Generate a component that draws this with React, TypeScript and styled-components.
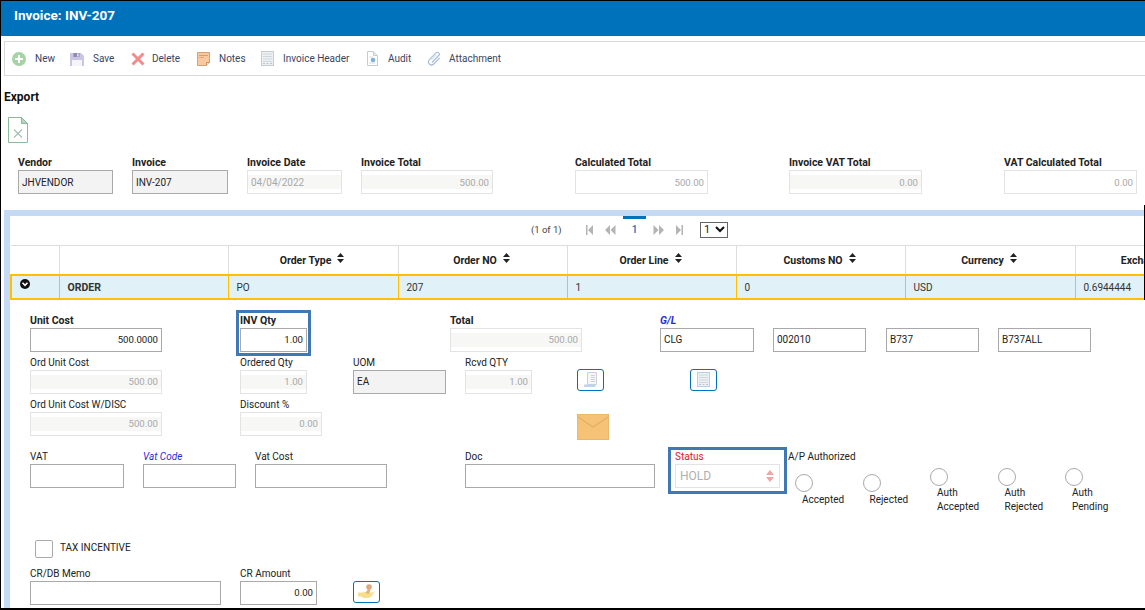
import React from "react";
import styled, { createGlobalStyle } from "styled-components";

const Global = createGlobalStyle`
  html, body { margin: 0; padding: 0; background: #fff; overflow: hidden; }
  * { box-sizing: border-box; }
`;

const FONT = `Roboto, "Noto Sans", Arial, sans-serif`;

const Page = styled.div`
  position: relative;
  width: 1145px; height: 610px; overflow: hidden; background: #fff;
  border-top: 1px solid #000; border-left: 1px solid #000; border-bottom: 2px solid #000;
  display: flex; flex-direction: column;
  font-family: ${FONT}; font-size: 10.5px; color: #222;
  &::after { content: ""; position: absolute; right: 0; top: 204px; width: 1px; height: 95px; background: #000; }
`;
const Header = styled.header`
  height: 35px; flex: none; background: #0072bc; color: #fff;
  font-size: 13.5px; font-weight: 700; padding: 6px 0 0 13px; line-height: 16px;
`;
const Toolbar = styled.nav`
  flex: none; height: 35px; margin: 5px 0 0 3px; border: 1px solid #d8d8d8; border-right: 0;
  display: flex; align-items: center; padding-left: 7px;
`;
const Tool = styled.div<{ $w: number; $gap: number }>`
  width: ${(p) => p.$w}px; flex: none; display: flex; align-items: center; gap: ${(p) => p.$gap}px;
  color: #3b4560; font-size: 10px;
  svg { flex: none; }
`;
const ExportTitle = styled.h2`
  margin: 14px 0 0 3px; font-size: 12px; line-height: 14px; font-weight: 700; color: #111;
`;
const ExcelWrap = styled.div`
  margin: 13px 0 0 7px; height: 26px; flex: none; svg { display: block; }
`;
const TopFields = styled.div`
  display: flex; flex: none; margin: 13px 0 0 17px; height: 38px;
`;
const Field = styled.div<{ $w: number; $ml?: number; $outlined?: boolean }>`
  width: ${(p) => p.$w}px; margin-left: ${(p) => p.$ml ?? 0}px; flex: none;
  ${(p) => (p.$outlined ? "outline: 3px solid #3f78b5; outline-offset: 1px;" : "")}
`;
const Label = styled.label<{ $bold?: boolean; $tone?: string; $italic?: boolean }>`
  display: block; height: 14px; line-height: 14px; white-space: nowrap;
  font-size: ${(p) => (p.$bold ? "10.5px" : "10px")};
  font-weight: ${(p) => (p.$bold ? 700 : 400)};
  font-style: ${(p) => (p.$italic ? "italic" : "normal")};
  color: ${(p) => p.$tone ?? "#222"};
`;
const LabelGap = styled.div`
  height: 14px;
`;
const Input = styled.input<{ $kind?: "plain" | "dim" | "dimFlat" | "grey"; $right?: boolean }>`
  display: block; width: 100%; height: 24px; padding: 0 3px; border-radius: 0; outline: 0;
  font-family: ${FONT}; font-size: ${(p) => (p.$right ? "9.6px" : "10px")};
  text-align: ${(p) => (p.$right ? "right" : "left")};
  border: 1px solid ${(p) => (p.$kind === "dim" || p.$kind === "dimFlat" ? "#e3e3e3" : "#a9a9a9")};
  color: ${(p) => (p.$kind === "dim" || p.$kind === "dimFlat" ? "#a8a8a8" : "#222")};
  background: ${(p) =>
    p.$kind === "grey"
      ? "#f3f3f3"
      : p.$kind === "dim"
        ? "linear-gradient(#f7f7f5,#f7f7f5) center/100% 14px no-repeat #fff"
        : "#fff"};
`;
const Panel = styled.section`
  flex: 1; min-height: 0; margin: 16px 0 0 3px; border-top: 6px solid #c5daf5; border-left: 6px solid #c5daf5;
  display: flex; flex-direction: column; overflow: hidden;
`;
const Pager = styled.div`
  flex: none; height: 29px; display: flex; align-items: center; padding-left: 521px; color: #444; font-size: 9.5px;
`;
const PagerCount = styled.span`
  width: 54px; flex: none; margin-top: -3px;
`;
const PagerIcon = styled.span<{ $w: number; $ml?: number }>`
  width: ${(p) => p.$w}px; margin-left: ${(p) => p.$ml ?? 0}px; flex: none; margin-top: -2px;
  display: flex; align-items: center; justify-content: center;
  svg { flex: none; }
`;
const PageNum = styled.span`
  position: relative; width: 23px; flex: none; height: 29px; line-height: 28px; text-align: center;
  color: #0072bc; font-weight: 500; font-size: 10px;
  &::before { content: ""; position: absolute; left: 0; right: 0; top: 0; height: 3px; background: #0072bc; }
`;
const PageSelect = styled.div`
  width: 28px; height: 16px; margin: -2px 0 0 12px; flex: none; border: 1px solid #666; color: #222; font-size: 11px;
  display: flex; align-items: center; justify-content: space-between; padding: 0 2px 0 3px;
`;
const Table = styled.table`
  flex: none; table-layout: fixed; width: 1240px; border-collapse: collapse; border-top: 1px solid #ddd;
  font-size: 10px;
`;
const Th = styled.th<{ $w: number }>`
  width: ${(p) => p.$w}px; height: 29px; padding: 2px 2px 0 0; border-left: 1px solid #ddd; font-weight: 700; font-size: 10.5px;
  text-align: center; color: #222;
  &:first-child { border-left: 0; }
  svg { margin: 0 0 6px 6px; vertical-align: middle; }
`;
const Tr = styled.tr`
  background: #e0f1f8;
`;
const Td = styled.td<{ $bold?: boolean }>`
  height: 24px; padding: 2px 0 0 8px; border: 2px solid #ffc000; border-width: 2px 1px;
  font-weight: ${(p) => (p.$bold ? 700 : 400)}; font-size: ${(p) => (p.$bold ? "10.5px" : "10px")};
  color: #333; white-space: nowrap; overflow: hidden;
  &:first-child { border-left-width: 2px; padding: 0 0 5px 8px; }
  svg { display: block; }
`;
const Form = styled.div`
  padding: 14px 0 0 20px; display: flex; flex-direction: column;
`;
const Row = styled.div<{ $mt?: number }>`
  display: flex; flex: none; height: 38px; margin-top: ${(p) => p.$mt ?? 4}px;
`;
const IconButton = styled.button<{ $ml: number; $mt?: number }>`
  width: 27px; height: 22px; flex: none; margin: ${(p) => p.$mt ?? 13}px 0 0 ${(p) => p.$ml}px; padding: 0;
  background: #fff; border: 1px solid #0072bc; border-radius: 3px; display: flex; align-items: center; justify-content: center;
`;
const Envelope = styled.div`
  margin: 16px 0 0 255px; width: 32px; height: 26px; flex: none;
  svg { display: block; }
`;
const StatusBox = styled.div`
  width: 119px; height: 47px; margin: -3px 0 0 13px; flex: none; border: 3px solid #3f78b5; padding: 0 4px 0 4px;
`;
const StatusSelect = styled.div`
  height: 24px; border: 1px solid #e3e3e3; color: #b0b0b0; font-size: 12px; padding: 0 5px 0 4px;
  display: flex; align-items: center; justify-content: space-between;
`;
const ApBlock = styled.div`
  width: 350px; margin-left: 1px; flex: none;
`;
const Radios = styled.div`
  display: flex; padding-left: 7px;
`;
const RadioItem = styled.div<{ $low?: boolean }>`
  width: 67.5px; flex: none; padding-top: ${(p) => (p.$low ? 10 : 4)}px;
`;
const Circle = styled.div`
  width: 18px; height: 18px; border-radius: 50%; border: 1px solid #aaa; background: #fff;
`;
const RadioText = styled.div<{ $low?: boolean }>`
  margin: ${(p) => (p.$low ? 1 : 0)}px 0 0 7px; font-size: 10px; line-height: 14px; color: #222;
`;
const CheckRow = styled.div`
  display: flex; align-items: center; gap: 7px; height: 18px; margin: 52px 0 0 5px; font-size: 10px; color: #222;
`;
const Check = styled.div`
  width: 18px; height: 18px; border: 1px solid #aaa; border-radius: 2px;
`;
const CheckText = styled.span`
  margin-top: -2px;
`;

const Plus = () => (
  <svg width="14" height="14" viewBox="0 0 14 14"><circle cx="7" cy="7" r="7" fill="#a5d3a5" /><path d="M7 3v8M3 7h8" stroke="#fff" strokeWidth="2" /></svg>
);
const Floppy = () => (
  <svg width="14" height="14" viewBox="0 0 14 14"><path d="M0 1h11l3 3v9a1 1 0 0 1-1 1H0z" fill="#c9c5e2" /><rect x="3.5" y="1" width="6" height="4" fill="#8f8ab5" /><rect x="7" y="1.5" width="1.6" height="3" fill="#e6e4f2" /><rect x="2" y="8" width="10" height="6" fill="#f5f4fa" /></svg>
);
const Cross = () => (
  <svg width="14" height="14" viewBox="0 0 14 14"><path d="M1.5 1.5l11 11M12.5 1.5l-11 11" stroke="#ef8d8d" strokeWidth="3" /></svg>
);
const Note = () => (
  <svg width="13" height="14" viewBox="0 0 13 14"><path d="M.5.5h12v10l-3 3H.5z" fill="#fac89e" stroke="#d9a072" /><path d="M2 3.5h9" stroke="#e39a5f" /><path d="M2 5.5h5" stroke="#eba56f" /><path d="M9.5 13.5v-3h3" fill="#eee" stroke="#c99468" /></svg>
);
const SheetIcon = () => (
  <svg width="13" height="15" viewBox="0 0 13 15"><rect x=".5" y=".5" width="12" height="14" fill="#eef1f3" stroke="#c4cbd1" /><path d="M2 3h9M2 5.5h9M2 8h9M2 10.5h9" stroke="#cfd6dc" /><path d="M2 12.5h2M5.5 12.5h2M9 12.5h2" stroke="#bcc4cb" /></svg>
);
const AuditIcon = () => (
  <svg width="11" height="15" viewBox="0 0 11 15"><path d="M.5.5h6l4 4v10H.5z" fill="#fff" stroke="#c7cdd4" /><path d="M6.5.5v4h4" fill="#e6eaee" stroke="#c7cdd4" /><path d="M2 6h4M2 12h6" stroke="#d8dde2" /><circle cx="6" cy="9" r="2.3" fill="#7fb0d6" /></svg>
);
const Clip = () => (
  <svg width="15" height="15" viewBox="0 0 15 15" fill="none"><path d="M5 11.5l6.7-7a1.9 1.9 0 0 0-2.7-2.7L2.4 8.7a3 3 0 0 0 4.3 4.3l6-6.2" stroke="#a9bddc" strokeWidth="1.2" /><path d="M4.4 9l5-5.2" stroke="#c5d3e8" strokeWidth="1" /></svg>
);
const Excel = () => (
  <svg width="20" height="26" viewBox="0 0 20 26" fill="none"><path d="M.5.5h13l6 6v19H.5z" fill="#fff" stroke="#8dbb98" /><path d="M13.5.5v6h6z" fill="#b5d6bd" stroke="#8dbb98" /><path d="M6 12.5l8 8M14 12.5l-8 8" stroke="#a3bdb0" strokeWidth="1.1" /></svg>
);
const Sort = () => (
  <svg width="7" height="10" viewBox="0 0 7 10"><path d="M3.5 0L7 4H0zM0 6h7l-3.5 4z" fill="#222" /></svg>
);
const PagerGlyph = ({ d }: { d: string }) => (
  <svg width="12" height="10" viewBox="0 0 12 10"><path d={d} fill="#b4b4b4" /></svg>
);
const Chevron = () => (
  <svg width="10" height="10" viewBox="0 0 10 10"><circle cx="5" cy="5" r="5" fill="#111" /><path d="M2.5 3.8L5 6.3l2.5-2.5" stroke="#fff" strokeWidth="1.6" fill="none" /></svg>
);
const Receipt = () => (
  <svg width="16" height="17" viewBox="0 0 16 17" fill="none"><path d="M4.5 1.5h9v12h-9z" fill="#f5f6f8" stroke="#c9d0d7" /><path d="M8 4.5h4M8 6.5h4M8 8.5h4M8 10.5h4" stroke="#ccd3da" /><path d="M1 13.5h11.5v2.5H1z" fill="#c3d3e0" /></svg>
);
const Coins = () => (
  <svg width="17" height="15" viewBox="0 0 17 15"><path d="M0 8.5h4.5l3-.8 3.5.8h3l3-1.5-3.5 5.5-3 1.5H5.5l-2-1.5H0z" fill="#f7de8d" /><path d="M7.5 9L10 5l2.5.8L11 10z" fill="#dcb877" /><circle cx="11" cy="3" r="2.8" fill="#dfa57c" /></svg>
);

const topFields = [
  { l: "Vendor", w: 95, ml: 0, v: "JHVENDOR", k: "grey" as const },
  { l: "Invoice", w: 96, ml: 19, v: "INV-207", k: "grey" as const },
  { l: "Invoice Date", w: 95, ml: 19, v: "04/04/2022", k: "dim" as const },
  { l: "Invoice Total", w: 132, ml: 19, v: "500.00", k: "dim" as const, r: true },
  { l: "Calculated Total", w: 133, ml: 82, v: "500.00", k: "dimFlat" as const, r: true },
  { l: "Invoice VAT Total", w: 133, ml: 81, v: "0.00", k: "dim" as const, r: true },
  { l: "VAT Calculated Total", w: 133, ml: 82, v: "0.00", k: "dimFlat" as const, r: true },
];
const cols = [
  { t: "", w: 48 }, { t: "", w: 169 }, { t: "Order Type", w: 170 }, { t: "Order NO", w: 169 },
  { t: "Order Line", w: 169 }, { t: "Customs NO", w: 169 }, { t: "Currency", w: 170 }, { t: "Exchange Rate", w: 176 },
];

export default function App() {
  return (
    <Page>
      <Global />
      <Header>Invoice: INV-207</Header>
      <Toolbar>
        <Tool $w={58} $gap={9}><Plus />New</Tool>
        <Tool $w={61} $gap={9}><Floppy />Save</Tool>
        <Tool $w={66} $gap={7}><Cross />Delete</Tool>
        <Tool $w={64} $gap={9}><Note />Notes</Tool>
        <Tool $w={106} $gap={9}><SheetIcon />Invoice Header</Tool>
        <Tool $w={60} $gap={10}><AuditIcon />Audit</Tool>
        <Tool $w={90} $gap={7}><Clip />Attachment</Tool>
      </Toolbar>
      <ExportTitle>Export</ExportTitle>
      <ExcelWrap><Excel /></ExcelWrap>
      <TopFields>
        {topFields.map((f) => (
          <Field key={f.l} $w={f.w} $ml={f.ml}>
            <Label $bold>{f.l}</Label>
            <Input readOnly value={f.v} $kind={f.k} $right={f.r} />
          </Field>
        ))}
      </TopFields>
      <Panel>
        <Pager>
          <PagerCount>(1 of 1)</PagerCount>
          <PagerIcon $w={8}><PagerGlyph d="M3 0h1.5v10H3zM10 0v10L5 5z" /></PagerIcon>
          <PagerIcon $w={27} $ml={3}><PagerGlyph d="M6 0v10L1 5zM11.5 0v10l-5-5z" /></PagerIcon>
          <PageNum>1</PageNum>
          <PagerIcon $w={26}><PagerGlyph d="M.5 0v10l5-5zM6 0v10l5-5z" /></PagerIcon>
          <PagerIcon $w={16}><PagerGlyph d="M2 0v10l5-5zM7.5 0H9v10H7.5z" /></PagerIcon>
          <PageSelect>1<svg width="10" height="7" viewBox="0 0 10 7"><path d="M1 1l4 4 4-4" stroke="#111" strokeWidth="2" fill="none" /></svg></PageSelect>
        </Pager>
        <Table>
          <thead>
            <tr>
              {cols.map((c, i) => (
                <Th key={i} $w={c.w}>{c.t}{c.t && <Sort />}</Th>
              ))}
            </tr>
          </thead>
          <tbody>
            <Tr>
              <Td><Chevron /></Td>
              <Td $bold>ORDER</Td>
              <Td>PO</Td>
              <Td>207</Td>
              <Td>1</Td>
              <Td>0</Td>
              <Td>USD</Td>
              <Td>0.6944444</Td>
            </Tr>
          </tbody>
        </Table>
        <Form>
          <Row $mt={0}>
            <Field $w={132}><Label $bold>Unit Cost</Label><Input readOnly value="500.0000" $right /></Field>
            <Field $w={67} $ml={78} $outlined><Label $bold>INV Qty</Label><Input readOnly value="1.00" $right /></Field>
            <Field $w={132} $ml={143}><Label $bold>Total</Label><Input readOnly value="500.00" $kind="dim" $right /></Field>
            <Field $w={94} $ml={78}><Label $bold $italic $tone="#2b2bd6">G/L</Label><Input readOnly value="CLG" /></Field>
            <Field $w={93} $ml={19}><LabelGap /><Input readOnly value="002010" /></Field>
            <Field $w={93} $ml={20}><LabelGap /><Input readOnly value="B737" /></Field>
            <Field $w={93} $ml={19}><LabelGap /><Input readOnly value="B737ALL" /></Field>
          </Row>
          <Row>
            <Field $w={132}><Label>Ord Unit Cost</Label><Input readOnly value="500.00" $kind="dim" $right /></Field>
            <Field $w={67} $ml={78}><Label>Ordered Qty</Label><Input readOnly value="1.00" $kind="dim" $right /></Field>
            <Field $w={93} $ml={46}><Label>UOM</Label><Input readOnly value="EA" $kind="grey" /></Field>
            <Field $w={67} $ml={19}><Label>Rcvd QTY</Label><Input readOnly value="1.00" $kind="dim" $right /></Field>
            <IconButton $ml={45}><Receipt /></IconButton>
            <IconButton $ml={86}><SheetIcon /></IconButton>
          </Row>
          <Row>
            <Field $w={132}><Label>Ord Unit Cost W/DISC</Label><Input readOnly value="500.00" $kind="dim" $right /></Field>
            <Field $w={82} $ml={78}><Label>Discount %</Label><Input readOnly value="0.00" $kind="dim" $right /></Field>
            <Envelope>
              <svg width="32" height="26" viewBox="0 0 32 26"><rect width="32" height="26" fill="#f5c276" stroke="#e0ad66" /><path d="M1 3l15 10L31 3" fill="none" stroke="#dca860" /></svg>
            </Envelope>
          </Row>
          <Row $mt={14}>
            <Field $w={94}><Label>VAT</Label><Input readOnly value="" /></Field>
            <Field $w={93} $ml={19}><Label $italic $tone="#2b2bd6">Vat Code</Label><Input readOnly value="" /></Field>
            <Field $w={132} $ml={19}><Label>Vat Cost</Label><Input readOnly value="" /></Field>
            <Field $w={190} $ml={78}><Label>Doc</Label><Input readOnly value="" /></Field>
            <StatusBox>
              <Label $tone="#e8141c">Status</Label>
              <StatusSelect>
                HOLD
                <svg width="8" height="14" viewBox="0 0 8 14"><path d="M4 1l4 5H0zM0 8h8l-4 5z" fill="#f5a3a3" /></svg>
              </StatusSelect>
            </StatusBox>
            <ApBlock>
              <Label>A/P Authorized</Label>
              <Radios>
                <RadioItem $low><Circle /><RadioText $low>Accepted</RadioText></RadioItem>
                <RadioItem $low><Circle /><RadioText $low>Rejected</RadioText></RadioItem>
                <RadioItem><Circle /><RadioText>Auth<br />Accepted</RadioText></RadioItem>
                <RadioItem><Circle /><RadioText>Auth<br />Rejected</RadioText></RadioItem>
                <RadioItem><Circle /><RadioText>Auth<br />Pending</RadioText></RadioItem>
              </Radios>
            </ApBlock>
          </Row>
          <CheckRow><Check /><CheckText>TAX INCENTIVE</CheckText></CheckRow>
          <Row $mt={9}>
            <Field $w={191}><Label>CR/DB Memo</Label><Input readOnly value="" /></Field>
            <Field $w={77} $ml={19}><Label>CR Amount</Label><Input readOnly value="0.00" $right /></Field>
            <IconButton $ml={36} $mt={14}><Coins /></IconButton>
          </Row>
        </Form>
      </Panel>
    </Page>
  );
}
